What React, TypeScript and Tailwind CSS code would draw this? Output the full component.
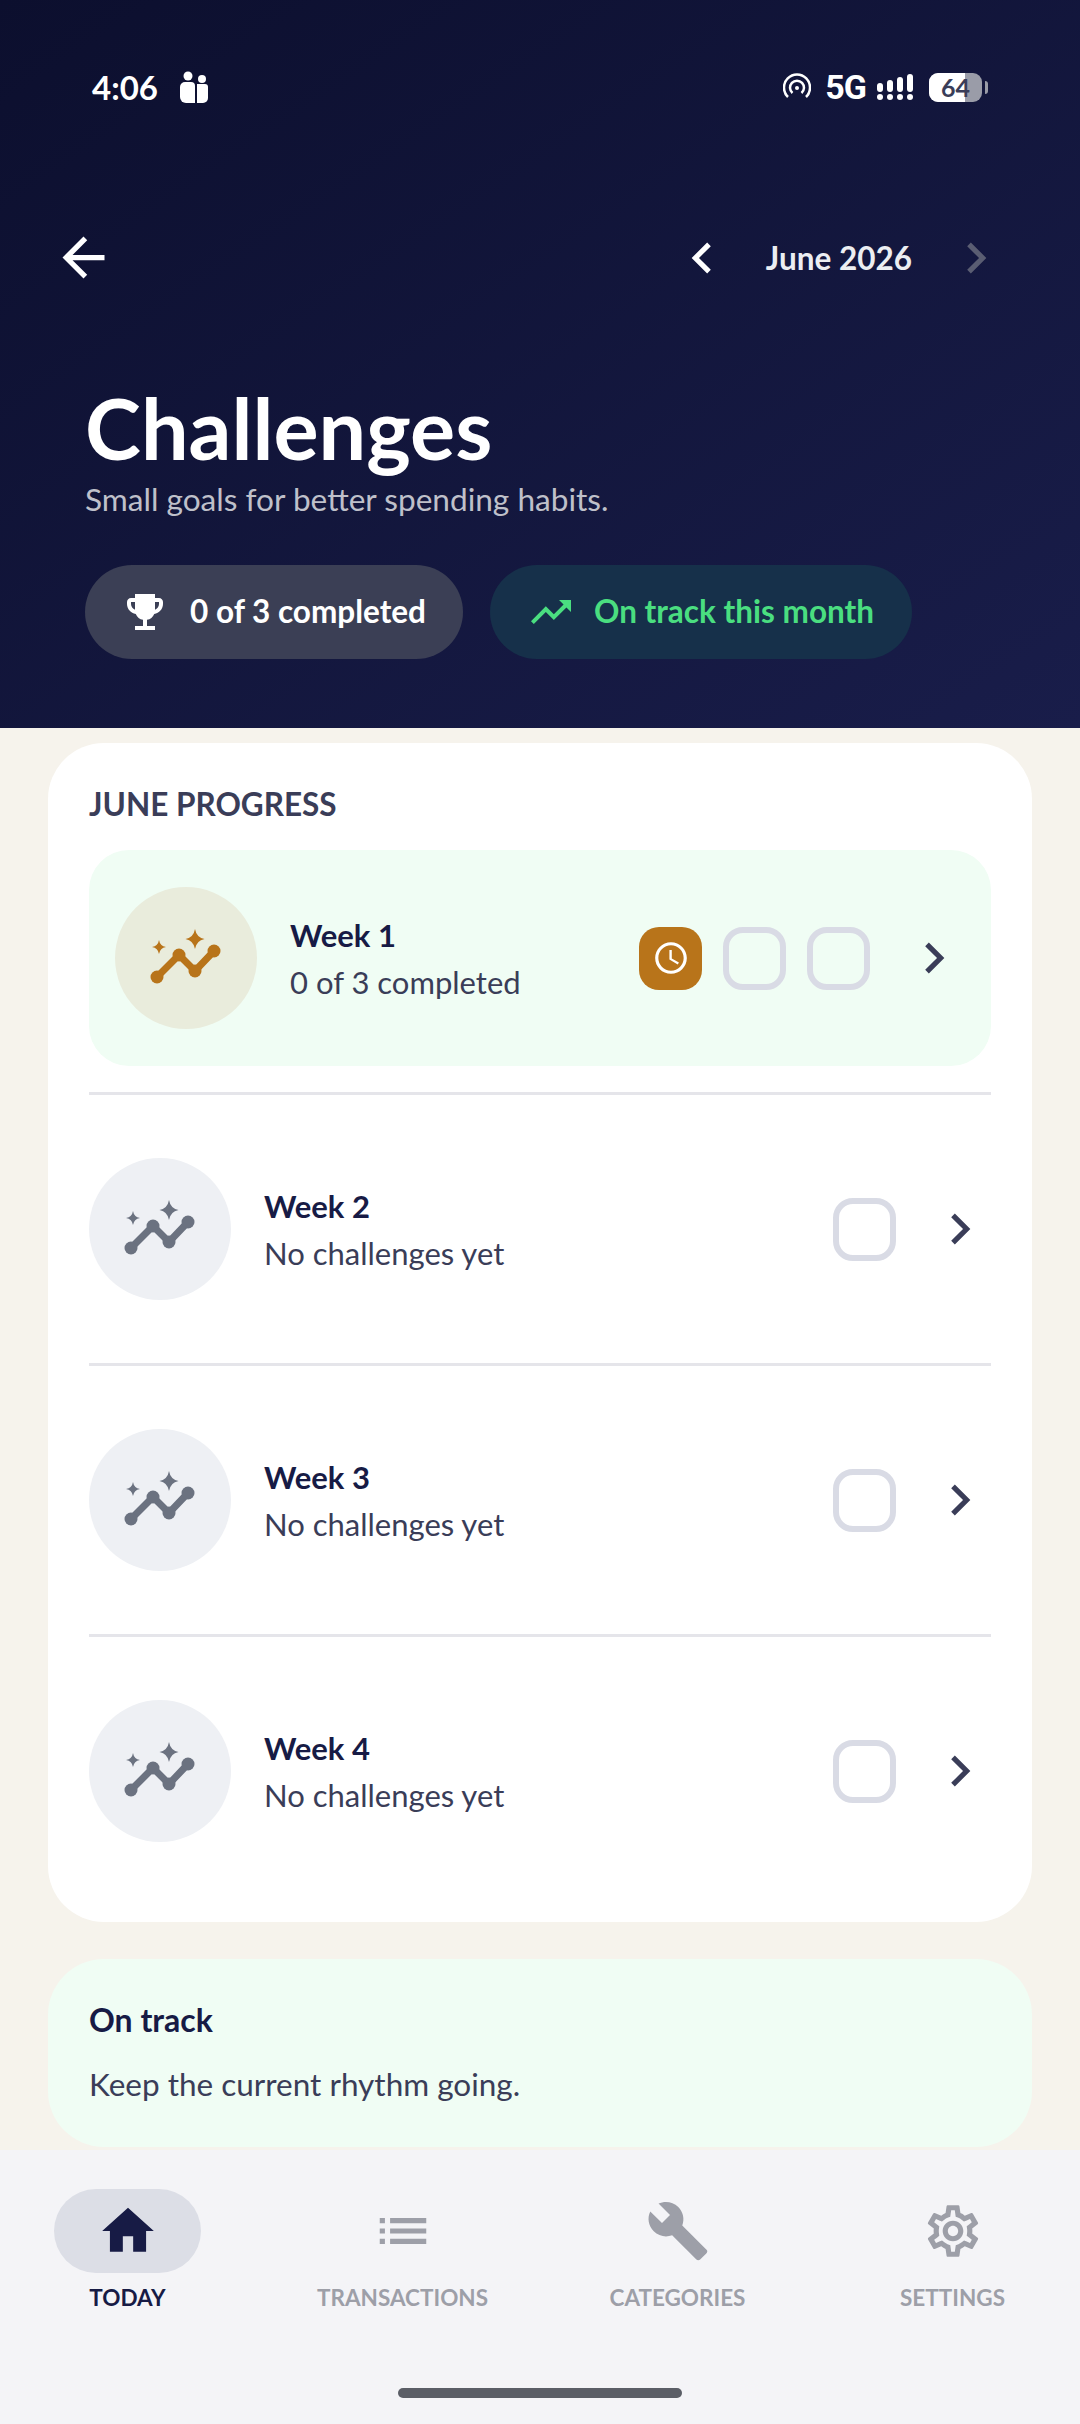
import { FC } from "react";
import {
  MdArrowBack,
  MdChevronLeft,
  MdChevronRight,
  MdEmojiEvents,
  MdTrendingUp,
  MdAccessTime,
  MdHome,
  MdList,
  MdBuild,
  MdOutlineSettings,
} from "react-icons/md";

const ProgressIcon: FC<{ color: string }> = ({ color }) => (
  <svg viewBox="0 0 142 142" className="h-full w-full" fill={color}>
    <path d="M42 90 64 68 80 84 99 64" fill="none" stroke={color} strokeWidth="7" />
    <circle cx="42" cy="90" r="6.5" />
    <circle cx="64" cy="68" r="6.5" />
    <circle cx="80" cy="84" r="6.5" />
    <circle cx="99" cy="64" r="6.5" />
    <path d="M80 42q1.5 8.500 9.500 10q-8 1.500-9.500 10q-1.500-8.500-9.500-10q8-1.500 9.500-10z" />
    <path d="M44 53q1 6 7 7q-6 1-7 7q-1-6-7-7q6-1 7-7z" />
  </svg>
);

const Square = () => (
  <div className="h-[63px] w-[63px] rounded-[20px] border-[6px] border-[#d9dbe5]" />
);

const Row: FC<{ title: string; sub: string; active?: boolean }> = ({ title, sub, active }) => (
  <div className={`flex h-[216px] items-center rounded-[40px] ${active ? "bg-green-50 px-[26px]" : ""}`}>
    <div className={`h-[142px] w-[142px] rounded-full ${active ? "bg-[#e9ecdc]" : "bg-[#eef0f4]"}`}>
      <ProgressIcon color={active ? "#b8741a" : "#6b7280"} />
    </div>
    <div className="ml-[33px] flex-1">
      <div className="text-[31px] leading-[40px] font-bold text-[#171b45]">{title}</div>
      <div className="mt-[7px] text-[31px] leading-[40px] text-[#3a3d58]">{sub}</div>
    </div>
    {active ? (
      <div className="flex gap-[21px]">
        <div className="flex h-[63px] w-[63px] items-center justify-center rounded-[20px] bg-[#b8741a]">
          <MdAccessTime size={38} color="#fff" />
        </div>
        <Square />
        <Square />
      </div>
    ) : (
      <Square />
    )}
    <MdChevronRight size={62} color="#3a3d58" className="ml-[33px]" />
  </div>
);

const navItems = [
  { label: "TODAY", icon: <MdHome size={62} color="#171b45" />, active: true },
  { label: "TRANSACTIONS", icon: <MdList size={62} color="#9d9fa8" /> },
  { label: "CATEGORIES", icon: <MdBuild size={64} color="#9d9fa8" /> },
  { label: "SETTINGS", icon: <MdOutlineSettings size={62} color="#9d9fa8" /> },
];

export default function App() {
  return (
    <div className="flex h-[2424px] w-[1080px] flex-col overflow-hidden bg-[#f6f3ec] font-['Lato',sans-serif]">
      <header className="h-[728px] shrink-0 bg-gradient-to-br from-[#0c0f2e] to-[#191d4a] text-white">
        {/* status bar */}
        <div className="mt-[71px] flex h-[32px] items-center justify-between px-[92px]">
          <div className="flex items-center gap-[21px]">
            <span className="text-[33px] leading-[32px] font-bold">4:06</span>
            <svg viewBox="0 0 29 32" className="h-[32px] w-[29px]" fill="#fff">
              <circle cx="9" cy="5" r="4.500" />
              <circle cx="23" cy="8" r="4" />
              <path d="M1 16a5 5 0 0 1 5-5h6a4 4 0 0 1 4 4v17H7a6 6 0 0 1-6-6z" />
              <path d="M18 13h8a3 3 0 0 1 3 3v11a5 5 0 0 1-5 5h-6z" />
            </svg>
          </div>
          <div className="flex items-center">
            <svg viewBox="0 0 28 28" className="h-[28px] w-[28px]" fill="none" stroke="#fff" strokeWidth="2.500">
              <path d="M5 24a13 13 0 1 1 18 0" />
              <path d="M9.500 20a7 7 0 1 1 9 0" />
              <circle cx="14" cy="15" r="2" fill="#fff" stroke="none" />
            </svg>
            <span className="ml-[14px] font-['Roboto',sans-serif] text-[34px] leading-[32px] font-bold tracking-[-1px]">5G</span>
            <svg viewBox="0 0 36 26" className="ml-[11px] h-[26px] w-[36px]" fill="#fff">
              <rect x="0" y="9" width="6" height="9" rx="3" />
              <rect x="10" y="6" width="6" height="12" rx="3" />
              <rect x="20" y="3" width="6" height="15" rx="3" />
              <rect x="30" y="0" width="6" height="18" rx="3" />
              <circle cx="3" cy="23" r="3" />
              <circle cx="13" cy="23" r="3" />
              <circle cx="23" cy="23" r="3" />
              <circle cx="33" cy="23" r="3" />
            </svg>
            <div className="relative ml-[16px] flex h-[29px] w-[53px] items-center justify-center rounded-[9px] bg-[#9a9ca8]">
              <div className="absolute inset-y-0 left-0 w-[36px] rounded-l-[9px] bg-white" />
              <span className="relative text-[25px] leading-[25px] font-bold text-[#3a3d58]">64</span>
            </div>
            <div className="ml-[3px] h-[13px] w-[3px] rounded-r-full bg-[#9a9ca8]" />
          </div>
        </div>

        {/* top nav */}
        <div className="mt-[123px] flex h-[63px] items-center justify-between pl-[52px] pr-[73px]">
          <MdArrowBack size={63} />
          <div className="flex items-center">
            <MdChevronLeft size={62} />
            <span className="ml-[33px] mr-[33px] text-[31.5px] leading-[36px] font-bold text-[#eceef2]">June 2026</span>
            <MdChevronRight size={62} color="#5a5d72" />
          </div>
        </div>

        {/* title */}
        <div className="pl-[85px]">
          <h1 className="mt-[94px] text-[84.5px] leading-[90px] font-bold">Challenges</h1>
          <p className="mt-[8px] text-[31.6px] leading-[36px] text-[#bfc0ca]">Small goals for better spending habits.</p>
          <div className="mt-[48px] flex gap-[27px]">
            <div className="flex h-[94px] w-[378px] items-center rounded-full bg-[#3b3f55] pl-[36px]">
              <MdEmojiEvents size={48} color="#fff" />
              <span className="ml-[21px] text-[31.5px] font-bold">0 of 3 completed</span>
            </div>
            <div className="flex h-[94px] w-[422px] items-center rounded-full bg-[#16304a] pl-[37px]">
              <MdTrendingUp size={48} color="#4ade80" />
              <span className="ml-[19px] text-[31.5px] font-bold text-[#4ade80]">On track this month</span>
            </div>
          </div>
        </div>
      </header>

      <main className="min-h-0 flex-1 overflow-hidden px-[48px] pt-[15px]">
        <section className="rounded-[56px] bg-white px-[41px] pb-[43px] pt-[44px]">
          <h2 className="text-[31.5px] leading-[34px] font-bold text-[#3a3d58]">JUNE PROGRESS</h2>
          <div className="mt-[29px]">
            <Row title="Week 1" sub="0 of 3 completed" active />
            <div className="my-[26px] h-[3px] bg-[#e5e5ea]" />
            <Row title="Week 2" sub="No challenges yet" />
            <div className="my-[26px] h-[3px] bg-[#e5e5ea]" />
            <Row title="Week 3" sub="No challenges yet" />
            <div className="my-[26px] h-[3px] bg-[#e5e5ea]" />
            <Row title="Week 4" sub="No challenges yet" />
          </div>
        </section>
        <section className="mt-[37px] h-[188px] rounded-[56px] bg-green-50 px-[41px] pt-[41px]">
          <div className="text-[32px] leading-[40px] font-bold text-[#171b45]">On track</div>
          <div className="mt-[24px] text-[31.5px] leading-[40px] text-[#3a3d58]">Keep the current rhythm going.</div>
        </section>
      </main>

      <nav className="relative h-[274px] shrink-0 bg-[#f4f4f7] px-[54px] pt-[39px]">
        <div className="flex justify-between">
          {navItems.map((item) => (
            <div key={item.label} className="flex w-[147px] flex-col items-center">
              <div className={`flex h-[84px] w-[147px] items-center justify-center rounded-full ${item.active ? "bg-[#dcdee6]" : ""}`}>
                {item.icon}
              </div>
              <span className={`mt-[11px] whitespace-nowrap text-[22.5px] leading-[28px] font-bold ${item.active ? "text-[#171b45]" : "text-[#9d9fa8]"}`}>
                {item.label}
              </span>
            </div>
          ))}
        </div>
        <div className="absolute bottom-[26px] left-[398px] h-[10px] w-[284px] rounded-full bg-[#5b5e66]" />
      </nav>
    </div>
  );
}
